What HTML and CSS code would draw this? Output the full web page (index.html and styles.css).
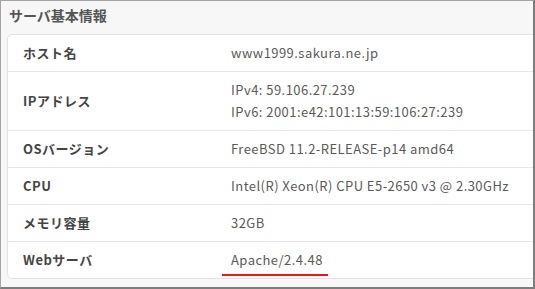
FILE: index.html
```
<!DOCTYPE html>
<html lang="ja">

<head>
    <meta charset="UTF-8">
    <meta name="viewport" content="width=device-width, initial-scale=1.0">
    <title>サーバ基本情報</title>
    <link rel="stylesheet" href="styles.css">
</head>

<body>
    <div class="frame">
        <h2 class="panel-title">サーバ基本情報</h2>
        <div class="info-card">
            <div class="info-row">
                <div class="info-label">ホスト名</div>
                <div class="info-value">www1999.sakura.ne.jp</div>
            </div>
            <div class="info-row">
                <div class="info-label">IPアドレス</div>
                <div class="info-value">
                    IPv4: 59.106.27.239<br>
                    IPv6: 2001:e42:101:13:59:106:27:239
                </div>
            </div>
            <div class="info-row">
                <div class="info-label">OSバージョン</div>
                <div class="info-value">FreeBSD 11.2-RELEASE-p14 amd64</div>
            </div>
            <div class="info-row">
                <div class="info-label">CPU</div>
                <div class="info-value">Intel(R) Xeon(R) CPU E5-2650 v3 @ 2.30GHz</div>
            </div>
            <div class="info-row">
                <div class="info-label">メモリ容量</div>
                <div class="info-value">32GB</div>
            </div>
            <div class="info-row">
                <div class="info-label">Webサーバ</div>
                <div class="info-value"><span class="marked">Apache/2.4.48</span></div>
            </div>
        </div>
    </div>
</body>

</html>
```

FILE: styles.css
```
body {
    margin: 0;
    padding: 0;
    font-family: "Noto Sans CJK JP", "Noto Sans", sans-serif;
    background-color: #ffffff;
}

.frame {
    width: 535px;
    height: 289px;
    box-sizing: border-box;
    background-color: #f7f7f7;
    border-top: 1px solid #a3a3a3;
    border-left: 1px solid #a3a3a3;
    border-right: 2px solid #7d7d7d;
    border-bottom: 2px solid #7d7d7d;
    padding: 0 0 0 6px;
    overflow: hidden;
}

.panel-title {
    margin: 0;
    height: 33px;
    line-height: 29px;
    padding-left: 2px;
    font-size: 14px;
    font-weight: bold;
    color: #555555;
}

.info-card {
    background-color: #ffffff;
    border: 1px solid #e3e3e3;
    border-radius: 5px;
    margin-right: -20px;
}

.info-row {
    display: flex;
    align-items: center;
    padding: 7px 0;
    border-bottom: 1px solid #e6e6e6;
}

.info-row:last-child {
    border-bottom: none;
}

.info-label {
    width: 208px;
    padding-left: 15px;
    font-size: 13px;
    font-weight: bold;
    letter-spacing: 0.5px;
    color: #454545;
    line-height: 22px;
}

.info-value {
    font-size: 13px;
    letter-spacing: 0.45px;
    color: #5a5a5a;
    line-height: 22px;
}

.marked {
    position: relative;
}

/* red annotation line under the web server version */
.marked::after {
    content: "";
    position: absolute;
    left: -9px;
    right: -5px;
    bottom: -7px;
    height: 2px;
    background-color: #e81818;
}
```
